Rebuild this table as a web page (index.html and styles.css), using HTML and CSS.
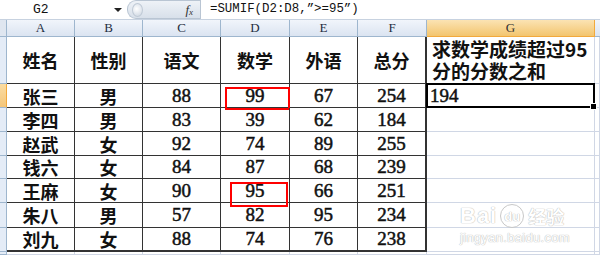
FILE: index.html
```html
<!DOCTYPE html>
<html lang="zh">
<head>
<meta charset="utf-8">
<title>SUMIF</title>
<link rel="stylesheet" href="styles.css">
</head>
<body>
<div class="fbar">
  <div class="namebox">G2</div>
  <div class="drop"></div>
  <div class="pill"><span class="knob"></span><span class="fx">f<sub>x</sub></span></div>
  <div class="formula">=SUMIF(D2:D8,”&gt;=95”)</div>
</div>
<div class="sheet">
  <div class="corner"></div>
  <div class="ch">A</div><div class="ch">B</div><div class="ch">C</div><div class="ch">D</div><div class="ch">E</div><div class="ch">F</div><div class="ch chsel">G</div><div class="ch chlast"></div>

  <div class="rh"></div>
  <div class="c t th">姓名</div><div class="c t th">性别</div><div class="c t th">语文</div><div class="c t th">数学</div><div class="c t th">外语</div><div class="c t th tr">总分</div>
  <div class="c g note">求数学成绩超过95分的分数之和</div><div class="c g"></div>

  <div class="rh rhsel"></div>
  <div class="c t">张三</div><div class="c t">男</div><div class="c t n">88</div><div class="c t n mark"><span class="box box1"></span>99</div><div class="c t n">67</div><div class="c t n tr">254</div>
  <div class="c g n sel">194</div><div class="c g"></div>

  <div class="rh"></div>
  <div class="c t">李四</div><div class="c t">男</div><div class="c t n">83</div><div class="c t n">39</div><div class="c t n">62</div><div class="c t n tr">184</div>
  <div class="c g"></div><div class="c g"></div>

  <div class="rh"></div>
  <div class="c t">赵武</div><div class="c t">女</div><div class="c t n">92</div><div class="c t n">74</div><div class="c t n">89</div><div class="c t n tr">255</div>
  <div class="c g"></div><div class="c g"></div>

  <div class="rh"></div>
  <div class="c t">钱六</div><div class="c t">女</div><div class="c t n">84</div><div class="c t n">87</div><div class="c t n">68</div><div class="c t n tr">239</div>
  <div class="c g"></div><div class="c g"></div>

  <div class="rh"></div>
  <div class="c t">王麻</div><div class="c t">女</div><div class="c t n">90</div><div class="c t n mark"><span class="box box2"></span>95</div><div class="c t n">66</div><div class="c t n tr">251</div>
  <div class="c g"></div><div class="c g"></div>

  <div class="rh"></div>
  <div class="c t">朱八</div><div class="c t">男</div><div class="c t n">57</div><div class="c t n">82</div><div class="c t n">95</div><div class="c t n tr">234</div>
  <div class="c g"></div><div class="c g"></div>

  <div class="rh"></div>
  <div class="c t tb">刘九</div><div class="c t tb">女</div><div class="c t n tb">88</div><div class="c t n tb">74</div><div class="c t n tb">76</div><div class="c t n tb tr">238</div>
  <div class="c g"></div><div class="c g"></div>

  <div class="rh"></div>
  <div class="c g"></div><div class="c g"></div><div class="c g"></div><div class="c g"></div><div class="c g"></div><div class="c g"></div><div class="c g"></div><div class="c g"></div>

  <div class="wm">
    <div class="wm-top"><span class="wm-bai">Bai</span><span class="wm-du">du</span><span class="wm-jy">经验</span></div>
    <div class="wm-url">jingyan.baidu.com</div>
  </div>
</div>
</body>
</html>
```

FILE: styles.css
```css
html, body {
  margin: 0;
  padding: 0;
  background: #ffffff;
  width: 600px;
  height: 255px;
  overflow: hidden;
}

.fbar {
  display: flex;
  align-items: stretch;
  height: 19px;
  border-bottom: 1px solid #c7d2e0;
  background: #ffffff;
}
.namebox {
  width: 110px;
  padding-left: 33px;
  box-sizing: border-box;
  font: 13px/19px "Liberation Mono", "DejaVu Sans Mono", monospace;
  color: #111;
}
.drop {
  width: 17px;
  position: relative;
}
.drop::after {
  content: "";
  position: absolute;
  left: 4px;
  top: 8px;
  border-left: 4px solid transparent;
  border-right: 4px solid transparent;
  border-top: 4px solid #222;
}
.pill {
  width: 73px;
  display: flex;
  align-items: center;
  justify-content: space-between;
  background: linear-gradient(#eef2f7, #d8e0ea);
  border-radius: 9px 0 0 9px;
  border: 1px solid #b9c5d3;
  border-right: none;
  box-sizing: border-box;
  padding: 0 7px 0 4px;
}
.knob {
  width: 9px;
  height: 12px;
  border-radius: 50%;
  background: radial-gradient(circle at 40% 40%, #ffffff, #c9d3df);
  border: 1px solid #c0cad6;
}
.fx {
  font: italic 13px/1 "Liberation Serif", serif;
  color: #333;
}
.fx sub {
  font-size: 9px;
  vertical-align: -1px;
}
.formula {
  flex: 1;
  border-left: 1px solid #b9c5d3;
  padding-left: 9px;
  font: 12.4px/19px "Liberation Mono", "DejaVu Sans Mono", monospace;
  color: #111;
}

.sheet {
  position: relative;
  display: grid;
  grid-template-columns: 7px 68px 68px 78px 69px 68px 69px 168px 1fr;
  grid-template-rows: 17px 47px 24px 24px 24px 23px 24px 25px 24px 1fr;
  height: 235px;
}

.corner {
  background: #dfe6f0;
  border-right: 1px solid #9eb6ce;
  border-bottom: 1px solid #9eb6ce;
}
.ch {
  background: linear-gradient(#f1f5fb, #dbe4f1);
  border-right: 1px solid #9eb6ce;
  border-bottom: 1px solid #9eb6ce;
  font: 13px/16px "Liberation Serif", serif;
  text-align: center;
  color: #1f2d40;
}
.chsel {
  background: linear-gradient(#fbe3b3, #f3c56e);
  border-right-color: #f2a93c;
  border-bottom-color: #f2a93c;
  color: #333;
}
.chlast {
  border-right: none;
}
.rh {
  background: #e4ecf7;
  border-right: 1px solid #9eb6ce;
  border-bottom: 1px solid #9eb6ce;
}
.rhsel {
  background: linear-gradient(#fbdca2, #f4c67a);
  border-right-color: #f2a93c;
}

.c {
  position: relative;
  box-sizing: border-box;
  display: flex;
  align-items: center;
  justify-content: center;
  font-family: "Noto Sans CJK SC", sans-serif;
  font-size: 18px;
  font-weight: 700;
  color: #111;
}
.t {
  border-right: 1px solid #333;
  border-bottom: 1px solid #333;
}
.tr {
  border-right: 2px solid #333;
}
.tb {
  border-bottom: 2px solid #333;
}
.n {
  font-family: "Liberation Serif", serif;
  font-size: 19px;
  font-weight: 400;
  -webkit-text-stroke: 0.5px #111;
}
.g {
  border-right: 1px solid #d0d7e5;
  border-bottom: 1px solid #d0d7e5;
}
.note {
  align-items: flex-start;
  justify-content: flex-start;
  padding: 1px 4px 0 5px;
  font-size: 19px;
  line-height: 22px;
  font-weight: 700;
  word-break: break-all;
}
.sel {
  justify-content: flex-start;
  padding-left: 3px;
}
.sel::after {
  content: "";
  position: absolute;
  left: -1px;
  top: -1px;
  right: -1px;
  bottom: -1px;
  border: 2px solid #000;
}
.sel::before {
  content: "";
  position: absolute;
  right: -3px;
  bottom: -3px;
  width: 5px;
  height: 5px;
  background: #000;
  border: 1px solid #fff;
  z-index: 2;
}

.box {
  position: absolute;
  border: 2px solid #ff0000;
  box-sizing: border-box;
}
.box1 {
  left: 4px;
  top: 3px;
  width: 65px;
  height: 23px;
}
.box2 {
  left: 9px;
  top: 3px;
  width: 58px;
  height: 25px;
}

.wm {
  position: absolute;
  left: 460px;
  top: 183px;
  color: #ffffff;
  font-family: "Liberation Sans", sans-serif;
  text-shadow: 0 0 1px #b8b8b8, 0 0 1px #b8b8b8;
  pointer-events: none;
}
.wm-top {
  display: flex;
  align-items: center;
  height: 26px;
}
.wm-bai {
  font-size: 22px;
  font-weight: 700;
  letter-spacing: 1px;
}
.wm-du {
  margin-left: 3px;
  font-size: 13px;
  font-weight: 700;
  width: 22px;
  height: 22px;
  border-radius: 50%;
  border: 1px solid #c8c8c8;
  display: flex;
  align-items: center;
  justify-content: center;
}
.wm-jy {
  margin-left: 4px;
  font-family: "Noto Sans CJK SC", sans-serif;
  font-size: 18px;
  font-weight: 700;
}
.wm-url {
  font-size: 13px;
  margin-top: 1px;
  letter-spacing: 0.3px;
}
```
